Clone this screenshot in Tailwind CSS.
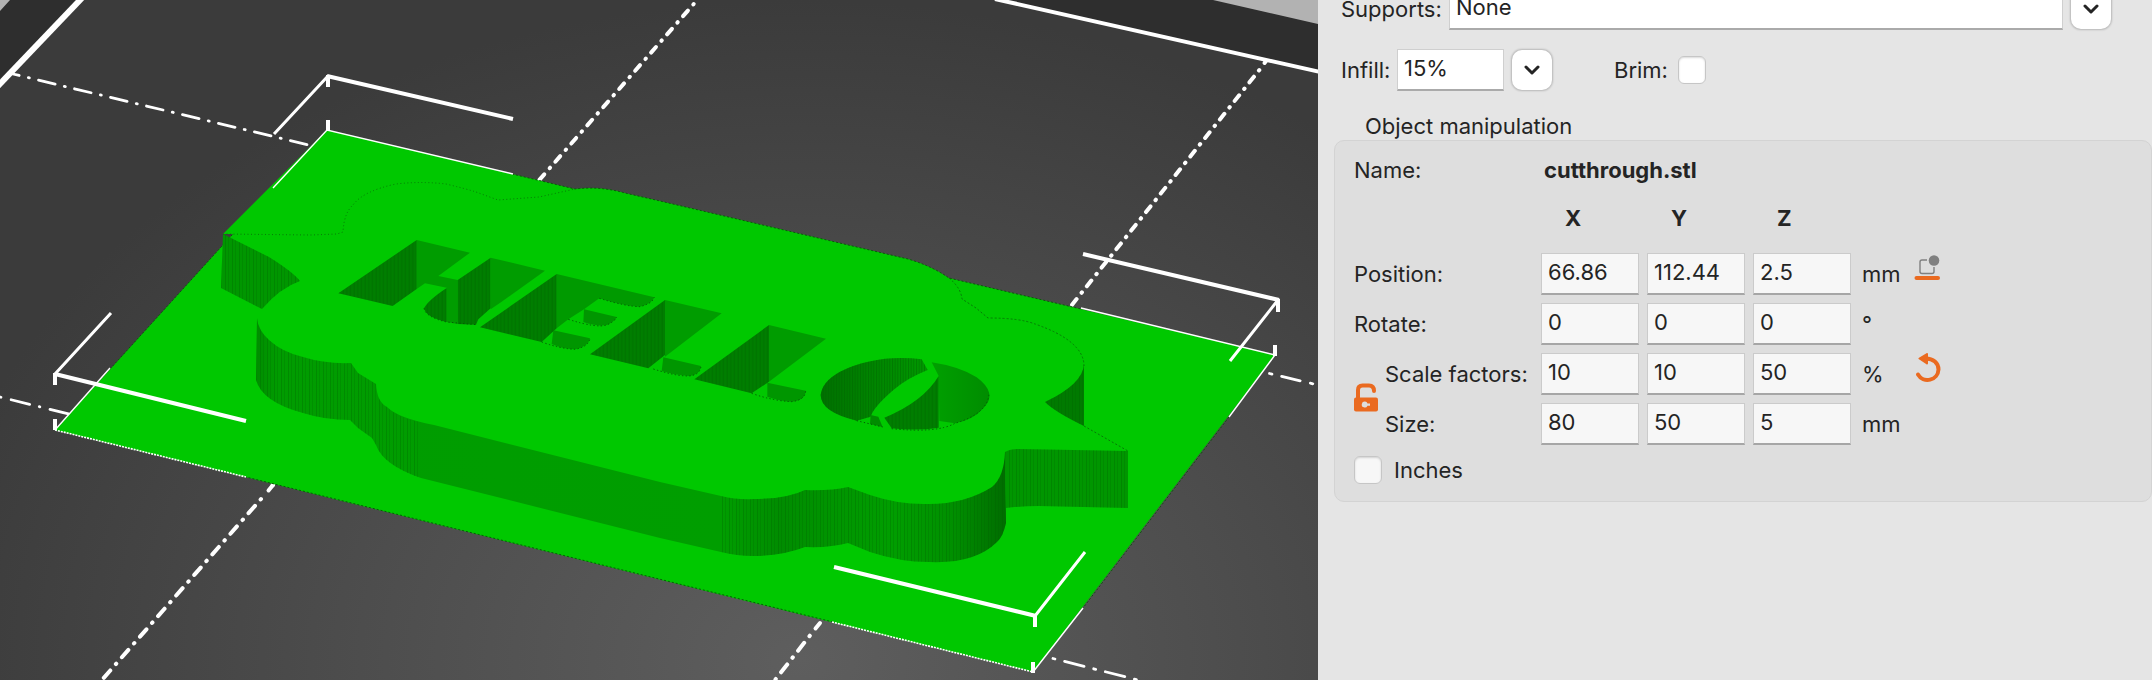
<!DOCTYPE html>
<html lang="en">
<head>
<meta charset="utf-8">
<title>Object manipulation</title>
<script src="https://cdn.jsdelivr.net/npm/@tailwindcss/browser@4"></script>
</head>
<body class="flex h-screen overflow-hidden bg-[#e5e5e5] font-['Inter',sans-serif] text-[22px] leading-7 text-[#242424]">

<main class="h-full min-w-0 flex-1 bg-[#2e2e2e]">
<svg class="block h-full w-full" viewBox="0 0 1318 680" preserveAspectRatio="xMidYMid slice" role="img" aria-label="3D view of the model on the print bed">
  <defs>
    <radialGradient id="bed" gradientUnits="userSpaceOnUse" cx="0" cy="0" r="1" gradientTransform="translate(800 660) scale(880 660)">
      <stop offset="0" stop-color="#5e5e5e"/><stop offset=".5" stop-color="#4d4d4d"/><stop offset="1" stop-color="#3b3b3b"/>
    </radialGradient>
    <pattern id="ridge" width="11" height="40" patternUnits="userSpaceOnUse">
      <rect width="11" height="40" fill="#007a00"/><rect x="7" width="2" height="40" fill="#008a00"/><rect x="4" width="2" height="40" fill="#007000"/>
    </pattern>
    <pattern id="fine" width="7" height="20" patternUnits="userSpaceOnUse">
      <rect x="1" width="1" height="20" fill="#006000" fill-opacity=".3"/><rect x="4" width="1" height="20" fill="#006000" fill-opacity=".2"/>
    </pattern>
    <pattern id="ribs" width="8" height="40" patternUnits="userSpaceOnUse">
      <rect width="3" height="40" fill="#006400" fill-opacity=".45"/>
    </pattern>
    <linearGradient id="wall" gradientUnits="userSpaceOnUse" x1="255" y1="0" x2="1006" y2="0">
      <stop offset="0" stop-color="#008c00"/><stop offset=".03" stop-color="#009c00"/><stop offset=".62" stop-color="#009e00"/>
      <stop offset=".7" stop-color="#008c00"/><stop offset=".78" stop-color="#009600"/><stop offset=".85" stop-color="#009e00"/>
      <stop offset=".93" stop-color="#008f00"/><stop offset="1" stop-color="#006c00"/>
    </linearGradient>
    <linearGradient id="bowl" x1="0" y1="0" x2="1" y2="0">
      <stop offset="0" stop-color="#007000"/><stop offset=".5" stop-color="#008600"/><stop offset="1" stop-color="#009a00"/>
    </linearGradient>
    <linearGradient id="bowl2" x1="0" y1="0" x2="1" y2="0">
      <stop offset="0" stop-color="#00a000"/><stop offset="1" stop-color="#008c00"/>
    </linearGradient>
  </defs>

  <!-- print bed -->
  <path fill="#b2b2b2" d="M0 0H10L0 11ZM1213 0H1318V24Z"/>
  <path fill="url(#bed)" d="M80 0H1002L1318 72V680H0V84Z"/>
  <path fill="none" stroke="#fff" stroke-width="6" d="M82-2-2 86"/>
  <path fill="none" stroke="#fff" stroke-width="4" d="M995-1 1320 72"/>
  <g fill="none" stroke="#fff" stroke-width="2.8" stroke-linecap="round">
    <path stroke-dasharray="17 9.5 1 9.5" stroke-dashoffset="10.7" d="M13 74 313 146"/>
    <path stroke-dasharray="2.5 10 19 10.5" d="M1269.500 373.500 1318 385"/>
    <path stroke-dasharray="19 10 .5 10.5" stroke-dashoffset="28.5" d="M0 397 69 414"/>
    <path stroke-dasharray="2 10 20 10" d="M1053 658.500 1140 680.500"/>
  </g>
  <g fill="none" stroke="#fff" stroke-width="4" stroke-linecap="round">
    <path stroke-dasharray=".6 8.2 7.4 8" d="M693.700 4 538 181.500"/>
    <path stroke-dasharray=".6 8.5 9.800 8.5" d="M273 485 268 490.500M261 499 101 681"/>
    <path stroke-dasharray=".6 8 7.200 7.900" d="M1259.300 70 1071 306"/>
    <path d="M1266 61 1264.500 63"/>
    <path stroke-dasharray=".6 8.5 9.900 8.5" d="M809.800 635.700 775 680"/>
    <path d="M820 623 815.500 628.500"/>
    <path d="M273 485 268.500 490.500"/>
  </g>

  <!-- flat base and raised plate -->
  <path fill="#00c800" d="M327 130 575 189Q600 186 625 193L660 201 908 259Q932 266 949 278L1275 355 1033 672 55 430 233 234H223Z"/>
  <path fill="none" stroke="#0a5a0a" stroke-width="1" stroke-dasharray="2 2" d="M512 174 575 189Q600 186 625 193L660 201 908 259Q932 266 949 278L1081 309M1229 417 1083 608M833 622 246 477M110 369 232 235"/>

  <!-- outer walls -->
  <path fill="#009600" d="M223 234 269 257Q293 272 300 281 280 288 262 309L221 288Z"/>
  <path fill="url(#fine)" d="M223 234 269 257Q293 272 300 281 280 288 262 309L221 288Z"/>
  <path fill="url(#wall)" d="M257 318Q258 330 269 340 282 352 303 357 325 364 351 363L358 373 376 384Q377 402 387 407 398 418 434 425L660 482 721 496Q738 500 753 499 787 499 805 490 830 491 848 487L870 495Q900 505 929 504 965 504 992 487 1004 477 1005 452L1006 523Q1003 537 997 542 975 564 929 562 900 562 870 552L848 543Q830 548 805 547 782 556 753 556 737 556 721 552L660 538 421 478Q383 465 376 445L372 438 358 428 350 420Q325 420 303 413 262 402 256 380Z"/>
  <path fill="url(#fine)" d="M257 318Q258 330 269 340 282 352 303 357 325 364 351 363L358 373 376 384Q377 402 387 407 398 418 420 422V478Q383 465 376 445L372 438 358 428 350 420Q325 420 303 413 262 402 256 380ZM721 496Q738 500 753 499 787 499 805 490 830 491 848 487L870 495Q900 505 929 504 965 504 992 487 1004 477 1005 452L1006 523Q1003 537 997 542 975 564 929 562 900 562 870 552L848 543Q830 548 805 547 782 556 753 556 737 556 721 552Z"/>
  <path fill="#009600" d="M1005 452Q1010 449 1018 449L1128 451V508L1039 506Q1020 506 1006 508Z"/>
  <path fill="url(#fine)" d="M1005 452Q1010 449 1018 449L1128 451V508L1039 506Q1020 506 1006 508Z"/>
  <path fill="#007a00" d="M1084 364V426Q1055 412 1045 402 1083 384 1084 364Z"/>
  <path fill="url(#fine)" d="M1084 364V426Q1055 412 1045 402 1083 384 1084 364Z"/>
  <path fill="none" stroke="#077a07" stroke-width="1" stroke-dasharray="1 2.5" d="M223 234 311 235 337 234 343 232Q344 213 353 205 363 191 396 184 421 181 446 184 463 188 476 192L498 200 539 197 575 189"/>
  <path fill="none" stroke="#077a07" stroke-width="1" stroke-dasharray="2 2" d="M949 278Q961 288 962 299L976 308 988 318Q1020 318 1035 324 1084 341 1084 366M1084 426 1128 451"/>

  <!-- HEL cutouts -->
  <g transform="translate(320 220) scale(.33333)">
    <path fill="#009c00" d="M290 60 450 98 355 168 413 180V312L380 306V203L315 190 290 207Z"/>
    <path fill="url(#ridge)" d="M55 220 290 60V207L218 258ZM380 204V306Q318 292 312 265 325 240 380 204ZM413 180 512 113V265L475 298 468 314 413 312Z"/>
    <path fill="#009c00" d="M512 113 675 152 545 245 512 268Z"/>
    <path fill="#009a00" d="M710 162 1003 232Q998 250 960 260 920 260 838 235L792 268 745 298 710 325Z"/>
    <path fill="#009600" d="M792 268 890 291Q884 305 860 315 830 320 790 306ZM700 331 810 355Q806 380 765 388 725 386 695 372Z"/>
    <path fill="url(#ridge)" d="M480 322 710 162V325L665 366ZM810 403 1035 240V405L985 445Z"/>
    <path fill="none" stroke="#045c04" stroke-width="3" stroke-dasharray="4 7" d="M838 235Q920 260 960 260 998 250 1003 232M745 298Q830 325 860 315 884 305 890 291M665 366Q720 386 765 388 806 380 810 355M312 265Q318 292 380 306L468 314"/>
  </g>

  <!-- LO cutouts -->
  <g transform="translate(660 270) scale(.33333)">
    <path fill="#009c00" d="M15 90 185 130 15 260ZM327 165 498 206 327 335Z"/>
    <path fill="#009600" d="M10 262 123 288Q120 316 85 318 45 316 5 303ZM322 338 437 362Q436 390 395 395 360 393 322 380Z"/>
    <path fill="url(#ridge)" d="M103 328 327 165V335L275 370Z"/>
    <path fill="url(#bowl)" d="M785 268 803 300Q740 325 700 360 640 412 632 440L590 452Q482 426 482 375 486 335 540 305 650 252 785 268Z"/>
    <path fill="url(#ribs)" d="M785 268 803 300Q740 325 700 360 640 412 632 440L590 452Q482 426 482 375 486 335 540 305 650 252 785 268Z"/>
    <path fill="#008c00" d="M632 435 655 440 668 471 630 462Z"/>
    <path fill="url(#bowl2)" d="M815 277Q900 290 950 322 1015 370 970 415 940 450 885 460L838 453 836 318Z"/>
    <path fill="url(#ridge)" d="M836 318V473Q770 483 695 475L673 443Q790 395 836 318Z"/>
    <path fill="none" stroke="#045c04" stroke-width="3" stroke-dasharray="4 7" d="M590 452 668 471M695 476Q830 490 885 460 985 430 987 370M275 370Q340 393 395 395 436 390 437 362M-20 297Q45 318 85 318 120 316 123 288"/>
  </g>

  <!-- selection box corners -->
  <g fill="none" stroke="#fff">
    <path stroke-width="4" d="M327 76 513 119M1083 254 1279 300M55 374 246 421M834 567 1036 616"/>
    <path stroke-width="3" d="M274 134 328 76M1278 300 1230 361M111 313 55 374M1085 552 1035 616"/>
    <path stroke-width="4" d="M328 75V87M328 120V130M1278 299V312M1275 345V356M55 373V385M55 419V430M1035 615V627M1033 662V673"/>
    <path stroke-width="1.4" d="M273 188 327 130 513 174M1081 308 1275 355 1229 417M110 368 55 430M1033 672 1083 608"/>
    <path stroke-width="1.6" stroke-dasharray="2 1" d="M55 430 246 477M832 622 1033 672"/>
  </g>
</svg>
</main>

<aside class="flex w-[834px] shrink-0 flex-col">
  <div class="-mt-3 flex items-center pl-[23px]">
    <label for="supports" class="w-[108px]">Supports:</label>
    <select id="supports" class="h-[42px] min-w-0 flex-1 appearance-none border border-b-2 border-[#cfcfcf] border-b-[#aaaaaa] bg-white px-1.5 pb-1 outline-none">
      <option>None</option>
    </select>
    <button type="button" aria-label="Open supports list" class="mr-[41px] ml-2 flex size-10 items-center justify-center rounded-[10px] bg-white shadow-[0_0_2px_1px_rgba(0,0,0,0.2)]">
      <svg class="size-4" viewBox="0 0 16 16" fill="none" stroke="#242424" stroke-width="3" stroke-linecap="round" stroke-linejoin="round"><path d="M2 5 8 11 14 5"/></svg>
    </button>
  </div>

  <div class="mt-[19px] flex items-center pl-[23px]">
    <label for="infill" class="w-14">Infill:</label>
    <input id="infill" type="text" value="15%" class="h-[42px] w-[107px] border border-b-2 border-[#cfcfcf] border-b-[#aaaaaa] bg-white px-1.5 pb-1 outline-none">
    <button type="button" aria-label="Open infill list" class="ml-2 flex size-10 items-center justify-center rounded-[10px] bg-white shadow-[0_0_2px_1px_rgba(0,0,0,0.2)]">
      <svg class="size-4" viewBox="0 0 16 16" fill="none" stroke="#242424" stroke-width="3" stroke-linecap="round" stroke-linejoin="round"><path d="M2 5 8 11 14 5"/></svg>
    </button>
    <label for="brim" class="ml-[62px] w-16">Brim:</label>
    <input id="brim" type="checkbox" class="size-7 appearance-none rounded-md border border-[#c6c6c6] bg-white shadow-[inset_0_1px_2px_rgba(0,0,0,0.15)]">
  </div>

  <h2 class="mt-[21px] pl-[47px]">Object manipulation</h2>

  <section class="ml-4 rounded-[10px] border border-[#d3d3d3] bg-[#dedede] pb-[17px] pl-[19px]">
    <div class="grid grid-cols-[179px_98px_98px_98px_47px_1fr] gap-x-2">
      <div class="flex h-[58px] items-center">Name:</div>
      <div class="col-span-5 flex items-center pl-[3px] font-bold">cutthrough.stl</div>
    </div>
    <div class="grid grid-cols-[179px_98px_98px_98px_47px_1fr] gap-x-2 pt-[5px] pb-[21px] font-bold">
      <div class="col-start-2 pl-6">X</div>
      <div class="pl-6">Y</div>
      <div class="pl-6">Z</div>
    </div>

    <div class="grid grid-cols-[31px_148px_98px_98px_98px_47px_1fr] items-center gap-y-2">
      <div class="col-span-2">Position:</div>
      <div class="col-span-3 flex gap-2 pl-2 -mr-6">
        <input type="text" aria-label="Position X" value="66.86" class="h-[42px] w-[98px] border border-b-2 border-[#cbcbcb] border-b-[#a6a6a6] bg-[#f7f7f7] px-1.5 pb-1 outline-none">
        <input type="text" aria-label="Position Y" value="112.44" class="h-[42px] w-[98px] border border-b-2 border-[#cbcbcb] border-b-[#a6a6a6] bg-[#f7f7f7] px-1.5 pb-1 outline-none">
        <input type="text" aria-label="Position Z" value="2.5" class="h-[42px] w-[98px] border border-b-2 border-[#cbcbcb] border-b-[#a6a6a6] bg-[#f7f7f7] px-1.5 pb-1 outline-none">
      </div>
      <div class="col-span-2 flex items-center self-stretch pl-[35px]">
        <span class="w-[52px]">mm</span>
        <button type="button" aria-label="Drop to bed" class="mt-0.5 self-start">
          <svg class="block h-[26px] w-[27px]" viewBox="0 0 27 26" fill="none"><path stroke="#808080" stroke-width="1.4" d="M13 5H8Q6 5 6 7V16.500Q6 18.500 8 18.500H18Q20 18.500 20 16.500V12"/><circle cx="20" cy="5.500" r="5.300" fill="#808080"/><path stroke="#ea6a20" stroke-width="4" stroke-linecap="round" d="M2.500 23H24"/></svg>
        </button>
      </div>

      <div class="col-span-2">Rotate:</div>
      <div class="col-span-3 flex gap-2 pl-2 -mr-6">
        <input type="text" aria-label="Rotate X" value="0" class="h-[42px] w-[98px] border border-b-2 border-[#cbcbcb] border-b-[#a6a6a6] bg-[#f7f7f7] px-1.5 pb-1 outline-none">
        <input type="text" aria-label="Rotate Y" value="0" class="h-[42px] w-[98px] border border-b-2 border-[#cbcbcb] border-b-[#a6a6a6] bg-[#f7f7f7] px-1.5 pb-1 outline-none">
        <input type="text" aria-label="Rotate Z" value="0" class="h-[42px] w-[98px] border border-b-2 border-[#cbcbcb] border-b-[#a6a6a6] bg-[#f7f7f7] px-1.5 pb-1 outline-none">
      </div>
      <div class="col-span-2 pl-[35px]">°</div>

      <button type="button" aria-label="Lock scale ratio" class="row-span-2 pb-1">
        <svg class="block h-[29px] w-6" viewBox="0 0 24 29"><path fill="none" stroke="#ea6a20" stroke-width="4" stroke-linecap="round" d="M4 16V7Q4 2.500 8.500 2.500H15Q20 2.500 20 8"/><rect y="14.500" width="24" height="14" rx="2" fill="#ea6a20"/><path fill="#dedede" d="M11 18.500A3 3 0 1 0 13.500 22.700H16V20.500H13.500A3 3 0 0 0 11 18.500Z"/></svg>
      </button>
      <div>Scale factors:</div>
      <div class="col-span-3 flex gap-2 pl-2 -mr-6">
        <input type="text" aria-label="Scale factor X" value="10" class="h-[42px] w-[98px] border border-b-2 border-[#cbcbcb] border-b-[#a6a6a6] bg-[#f7f7f7] px-1.5 pb-1 outline-none">
        <input type="text" aria-label="Scale factor Y" value="10" class="h-[42px] w-[98px] border border-b-2 border-[#cbcbcb] border-b-[#a6a6a6] bg-[#f7f7f7] px-1.5 pb-1 outline-none">
        <input type="text" aria-label="Scale factor Z" value="50" class="h-[42px] w-[98px] border border-b-2 border-[#cbcbcb] border-b-[#a6a6a6] bg-[#f7f7f7] px-1.5 pb-1 outline-none">
      </div>
      <div class="col-span-2 flex items-center self-stretch pl-[35px]">
        <span class="w-[52px]">%</span>
        <button type="button" aria-label="Reset scale" class="self-start">
          <svg class="block h-[30px] w-[27px]" viewBox="0 0 27 30"><path fill="none" stroke="#ea6a20" stroke-width="4" stroke-linecap="round" d="M12 5.500C19 5.500 24.500 10 24.500 16.500A11 11 0 0 1 4 21.500"/><path fill="#ea6a20" stroke="#ea6a20" stroke-width="2" stroke-linejoin="round" d="M5.500 5.500 13 1V10.500Z"/></svg>
        </button>
      </div>

      <div>Size:</div>
      <div class="col-span-3 flex gap-2 pl-2 -mr-6">
        <input type="text" aria-label="Size X" value="80" class="h-[42px] w-[98px] border border-b-2 border-[#cbcbcb] border-b-[#a6a6a6] bg-[#f7f7f7] px-1.5 pb-1 outline-none">
        <input type="text" aria-label="Size Y" value="50" class="h-[42px] w-[98px] border border-b-2 border-[#cbcbcb] border-b-[#a6a6a6] bg-[#f7f7f7] px-1.5 pb-1 outline-none">
        <input type="text" aria-label="Size Z" value="5" class="h-[42px] w-[98px] border border-b-2 border-[#cbcbcb] border-b-[#a6a6a6] bg-[#f7f7f7] px-1.5 pb-1 outline-none">
      </div>
      <div class="col-span-2 pl-[35px]">mm</div>
    </div>

    <label class="mt-[11px] flex items-center gap-3">
      <input type="checkbox" class="size-7 appearance-none rounded-md border border-[#c6c6c6] bg-[#f7f7f7] shadow-[inset_0_1px_2px_rgba(0,0,0,0.15)]">
      Inches
    </label>
  </section>
</aside>
</body>
</html>
